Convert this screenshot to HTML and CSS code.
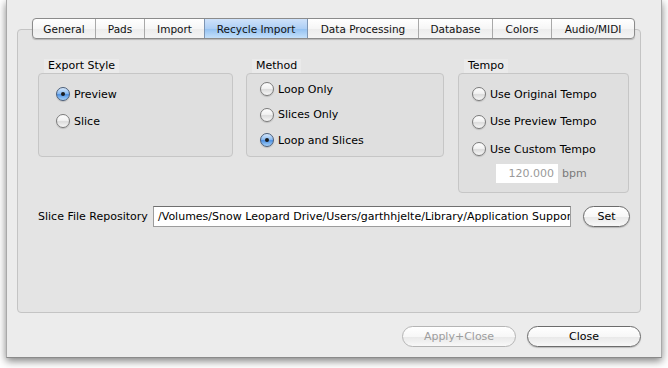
FILE: index.html
```html
<!DOCTYPE html>
<html lang="en">
<head>
  <meta charset="UTF-8">
  <title>Preferences</title>
  <link rel="stylesheet" href="styles.css">
</head>
<body>

  <div class="window">

    <!-- tab strip -->
    <div class="tabs">
      <div class="tab t-general">General</div>
      <div class="tab t-pads">Pads</div>
      <div class="tab t-import">Import</div>
      <div class="tab t-recycle selected">Recycle Import</div>
      <div class="tab t-data">Data Processing</div>
      <div class="tab t-db">Database</div>
      <div class="tab t-colors">Colors</div>
      <div class="tab t-audio">Audio/MIDI</div>
    </div>

    <div class="panel">

      <div class="groups">
        <div class="group g-export">
          <div class="group-label">Export Style</div>
          <div class="group-box">
            <div class="radio-row"><span class="radio on"></span>Preview</div>
            <div class="radio-row"><span class="radio"></span>Slice</div>
          </div>
        </div>

        <div class="group g-method">
          <div class="group-label">Method</div>
          <div class="group-box">
            <div class="radio-row"><span class="radio"></span>Loop Only</div>
            <div class="radio-row"><span class="radio"></span>Slices Only</div>
            <div class="radio-row"><span class="radio on"></span>Loop and Slices</div>
          </div>
        </div>

        <div class="group g-tempo">
          <div class="group-label">Tempo</div>
          <div class="group-box">
            <div class="radio-row"><span class="radio"></span>Use Original Tempo</div>
            <div class="radio-row"><span class="radio"></span>Use Preview Tempo</div>
            <div class="radio-row"><span class="radio"></span>Use Custom Tempo</div>
            <div class="tempo-row">
              <div class="tempo-field">120.000</div>
              <span class="unit">bpm</span>
            </div>
          </div>
        </div>
      </div>

      <div class="repo-row">
        <span class="repo-label">Slice File Repository</span>
        <div class="repo-field">/Volumes/Snow Leopard Drive/Users/garthhjelte/Library/Application Suppor</div>
        <button class="btn btn-set">Set</button>
      </div>

    </div>

    <div class="footer">
      <button class="btn btn-wide disabled">Apply+Close</button>
      <button class="btn btn-wide">Close</button>
    </div>

  </div>

</body>
</html>
```

FILE: styles.css
```css
/* Reset */
* {
  margin: 0;
  padding: 0;
  box-sizing: border-box;
}

body {
  background: #fff;
  font-family: 'DejaVu Sans', 'Lucida Grande', sans-serif;
  font-size: 11px;
  color: #000;
  width: 668px;
  height: 368px;
  overflow: hidden;
}

.window {
  margin-left: 6px;
  width: 656px;
  height: 358px;
  background: #ececec;
  border: 1px solid #a9a9a9;
  border-top: none;
  border-bottom-color: #8a8a8a;
  box-shadow: 0 3px 8px rgba(0, 0, 0, 0.5);
  padding: 18px 20px 0 10px;
  display: flex;
  flex-direction: column;
}

/* tabs */
.tabs {
  display: flex;
  height: 21px;
  margin-left: 15px;
  align-self: flex-start;
  border: 1px solid #8b8b8b;
  border-radius: 4px;
  background: linear-gradient(#ffffff, #f6f6f6 50%, #ececec 51%, #f4f4f4);
  box-shadow: 0 1px 1px rgba(0, 0, 0, 0.2);
  position: relative;
  z-index: 2;
}

.tab {
  display: flex;
  align-items: center;
  justify-content: center;
  border-left: 1px solid #a9a9a9;
  font-size: 10.5px;
  color: #111;
}

.tab:first-child { border-left: none; }

.tab.selected {
  background: linear-gradient(#cfe2fa, #aecff5 50%, #92c0f1 51%, #c5e1fb);
  border-left-color: #7d95b3;
}
.tab.selected + .tab { border-left-color: #7d95b3; }

.t-general { width: 62px; }
.t-pads { width: 49px; }
.t-import { width: 60px; }
.t-recycle { width: 103px; }
.t-data { width: 111px; }
.t-db { width: 74px; }
.t-colors { width: 59px; }
.t-audio { width: 83px; }

/* panel */
.panel {
  margin-top: -10px;
  height: 284px;
  background: #e4e4e4;
  border: 1px solid #c4c4c4;
  border-radius: 4px;
  padding: 29px 10px 0 20px;
}

.groups {
  display: flex;
  align-items: flex-start;
  gap: 13px;
}

.group-label {
  display: inline-block;
  height: 14px;
  line-height: 14px;
  margin-left: 6px;
  padding: 0 4px;
  background: #eaeaea;
}

.group-box {
  background: #dfdfdf;
  border: 1px solid #c6c6c6;
  border-radius: 4px;
}

.g-export .group-box { width: 195px; height: 84px; padding: 10px 0 0 17px; }
.g-method { margin-right: 1px; }
.g-method .group-box { width: 198px; height: 84px; padding: 5px 0 0 13px; }
.g-tempo .group-box { width: 171px; height: 120px; padding: 10px 0 0 13px; }

.radio-row {
  display: flex;
  align-items: center;
  height: 20px;
  margin-bottom: 7px;
}

.g-method .radio-row { margin-bottom: 5.5px; }
.g-tempo .radio-row { margin-bottom: 7.5px; }

.radio {
  width: 14px;
  height: 14px;
  border-radius: 50%;
  border: 1px solid #7a7a7a;
  background: linear-gradient(#fdfdfd, #f2f2f2 45%, #dcdcdc 55%, #f7f7f7);
  box-shadow: 0 1px 1px rgba(0, 0, 0, 0.15);
  margin-right: 4px;
  display: flex;
  align-items: center;
  justify-content: center;
}

.radio.on {
  border-color: #4a5d78;
  background: linear-gradient(#d5e7fb, #8cbcf1 45%, #4e91e3 55%, #a7d2f8);
}

.radio.on::after {
  content: "";
  width: 4px;
  height: 4px;
  border-radius: 50%;
  background: #1b1b1b;
}

.tempo-row {
  display: flex;
  align-items: center;
  margin: -3px 0 0 24px;
}

.tempo-field {
  width: 62px;
  height: 19px;
  line-height: 19px;
  background: #fff;
  color: #9a9a9a;
  text-align: right;
  padding-right: 4px;
}

.unit {
  margin-left: 4px;
  color: #7a7a7a;
}

/* repository row */
.repo-row {
  display: flex;
  align-items: center;
  margin-top: 13px;
}

.repo-label {
  width: 115px;
}

.repo-field {
  width: 418px;
  height: 21px;
  line-height: 19px;
  background: #fff;
  border: 1px solid #9c9c9c;
  border-top-color: #6f6f6f;
  padding-left: 4px;
  white-space: nowrap;
  overflow: hidden;
}

/* buttons */
.btn {
  font-family: inherit;
  font-size: 11px;
  height: 21px;
  border: 1px solid #6c6c6c;
  border-radius: 11px;
  background: linear-gradient(#ffffff, #f7f7f7 50%, #e8e8e8 51%, #f8f8f8);
  box-shadow: 0 1px 1px rgba(0, 0, 0, 0.2);
  color: #000;
}

.btn-set {
  width: 47px;
  margin-left: 12px;
}

.footer {
  display: flex;
  justify-content: flex-end;
  gap: 11px;
  margin-top: 13px;
}

.btn-wide { width: 114px; }

.btn.disabled {
  border-color: #b5b5b5;
  color: #9d9d9d;
  box-shadow: none;
}
```
